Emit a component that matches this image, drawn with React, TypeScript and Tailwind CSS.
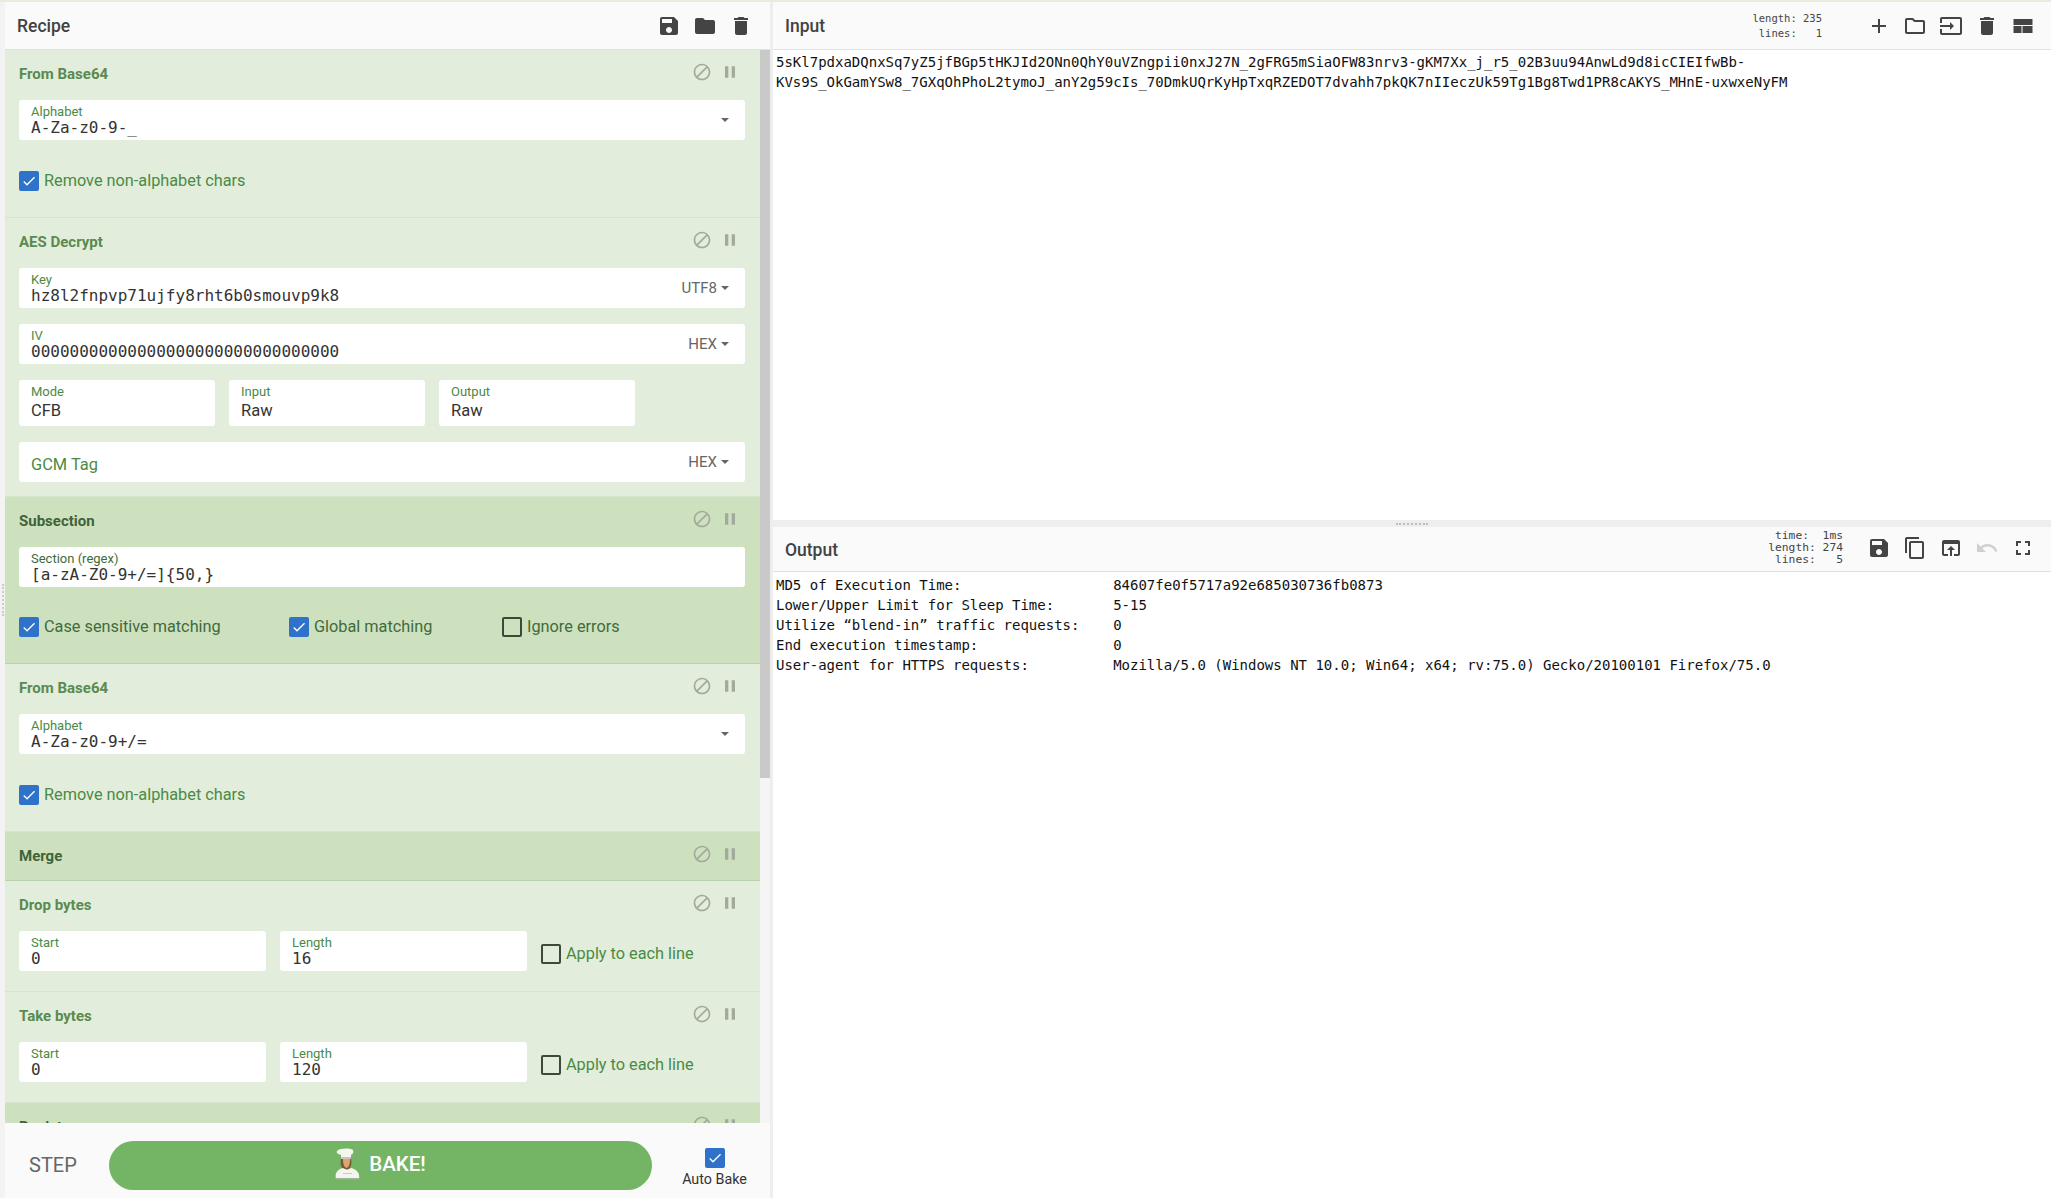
import type { ReactNode } from "react";
import {
  MdAdd,
  MdBlock,
  MdCheck,
  MdContentCopy,
  MdDelete,
  MdFolder,
  MdFullscreen,
  MdInput,
  MdOpenInBrowser,
  MdOutlineFolder,
  MdPause,
  MdSave,
  MdUndo,
} from "react-icons/md";

const sans = "font-['Roboto',sans-serif]";
const mono = "font-['DejaVu_Sans_Mono',monospace]";

function Caret() {
  return <span className="ml-[4px] inline-block h-0 w-0 border-x-[4px] border-t-[4px] border-x-transparent border-t-[#666]" />;
}

function Field({ label, value, suffix, dark, select }: { label: string; value: string; suffix?: string; dark?: boolean; select?: boolean }) {
  return (
    <div className="flex h-[40px] items-start justify-between rounded-[3px] bg-white pl-[12px] pr-[16px]">
      <div>
        <div className={`pt-[4px] text-[13px] leading-[16px] ${dark ? "text-[#3f6b3c]" : "text-[#4b8a45]"}`}>{label}</div>
        <div className={`${mono} -mt-[1px] text-[16px] leading-[18px] text-[#333]`}>{value}</div>
      </div>
      {suffix && (
        <div className="flex h-[40px] items-center text-[15px] text-[#666]">
          {suffix}
          <Caret />
        </div>
      )}
      {select && (
        <div className="flex h-[40px] items-center">
          <Caret />
        </div>
      )}
    </div>
  );
}

function SmallField({ label, value, mono: isMono, className }: { label: string; value: string; mono?: boolean; className: string }) {
  return (
    <div className={`rounded-[3px] bg-white pl-[12px] ${className}`}>
      <div className="pt-[4px] text-[13px] leading-[16px] text-[#4b8a45]">{label}</div>
      <div className={isMono ? `${mono} -mt-[1px] text-[16px] leading-[18px] text-[#333]` : "pt-[1px] text-[16.500px] leading-[20px] text-[#333]"}>{value}</div>
    </div>
  );
}

function Check({ label, on, dark }: { label: string; on?: boolean; dark?: boolean }) {
  return (
    <div className="flex items-center gap-[5px]">
      {on ? (
        <span className="flex h-[20px] w-[20px] items-center justify-center rounded-[2px] bg-[#2f72c9] text-white">
          <MdCheck size={16} />
        </span>
      ) : (
        <span className="h-[20px] w-[20px] rounded-[2px] border-2 border-[#3d4a3a]" />
      )}
      <span className={`text-[16.300px] leading-[20px] ${dark ? "text-[#3f6b3c]" : "text-[#4b8a45]"}`}>{label}</span>
    </div>
  );
}

function Op({ title, dark, compact, children }: { title: string; dark?: boolean; compact?: boolean; children?: ReactNode }) {
  return (
    <section className={`border-b ${dark ? "border-[#b9d2ab] bg-[#cee1bf]" : "border-[#d6e5cc] bg-[#e2eedb]"}`}>
      <div className={`flex items-center justify-between pl-[14px] pr-[20px] ${compact ? "h-[48px]" : "h-[50px] pb-[2px]"}`}>
        <h2 className={`text-[15px] font-bold ${dark ? "text-[#3f6339]" : "text-[#5a8a50]"}`}>{title}</h2>
        <div className="mb-[4px] flex items-center gap-[8px] text-[#a1aa9c]">
          <MdBlock size={20} />
          <MdPause size={20} />
        </div>
      </div>
      {children && <div className="px-[15px] pl-[14px]">{children}</div>}
    </section>
  );
}

function HeaderIcon({ children, muted }: { children: ReactNode; muted?: boolean }) {
  return <span className={`flex w-[36px] justify-center ${muted ? "text-[#d0d0d0]" : "text-[#444]"}`}>{children}</span>;
}

function LayoutIcon() {
  return (
    <svg width="24" height="24" viewBox="0 0 24 24" fill="currentColor" aria-hidden="true">
      <path d="M2.500 5h19v6h-19z" />
      <path d="M2.500 12h8v7h-8z" />
      <path d="M11.500 12h10v7h-10z" />
    </svg>
  );
}

function Chef() {
  return (
    <svg width="25" height="32" viewBox="0 0 25 32" aria-hidden="true">
      <path d="M2 3c3-3 13-3 16-1 1 2 0 4-2 5v4H6V7C3 6 1 5 2 3z" fill="#f5f5f0" />
      <path d="M6 9h10v2H6z" fill="#c6c6ba" />
      <path d="M6 11h10c1 5 0 8-2 10H8c-2-2-3-5-2-10z" fill="#7d5a35" />
      <path d="M8 11h7c0 5-1 8-3.500 9C9 19 8 16 8 11z" fill="#d9a86f" />
      <path d="M1 31c-1-5 0-9 7-11l4 2 4-2c7 2 9 6 8 11z" fill="#f3f5ef" />
      <path d="M8 25h9v1H8z" fill="#c2cdbd" />
      <path d="M1 30h23v1.500H1z" fill="#9db597" />
    </svg>
  );
}

function Recipe() {
  return (
    <div className="flex w-[765px] shrink-0 flex-col">
      <header className="flex h-[48px] shrink-0 items-center justify-between border-b border-[#e0e2dd] bg-[#fafafa] pl-[12px] pr-[11px]">
        <h1 className="pt-[2px] text-[17.500px] font-medium text-[#424242]">Recipe</h1>
        <div className="flex">
          <HeaderIcon><MdSave size={24} /></HeaderIcon>
          <HeaderIcon><MdFolder size={24} /></HeaderIcon>
          <HeaderIcon><MdDelete size={24} /></HeaderIcon>
        </div>
      </header>
      <div className="flex min-h-0 flex-1 overflow-hidden">
        <div className="w-[755px] shrink-0 overflow-hidden">
          <Op title="From Base64">
            <Field label="Alphabet" value="A-Za-z0-9-_" select />
            <div className="pb-[26px] pt-[31px]"><Check label="Remove non-alphabet chars" on /></div>
          </Op>
          <Op title="AES Decrypt">
            <div className="flex flex-col gap-[16px] pb-[14px]">
              <Field label="Key" value="hz8l2fnpvp71ujfy8rht6b0smouvp9k8" suffix="UTF8" />
              <Field label="IV" value="00000000000000000000000000000000" suffix="HEX" />
              <div className="flex gap-[14px]">
                <SmallField label="Mode" value="CFB" className="h-[46px] w-[196px]" />
                <SmallField label="Input" value="Raw" className="h-[46px] w-[196px]" />
                <SmallField label="Output" value="Raw" className="h-[46px] w-[196px]" />
              </div>
              <div className="flex h-[40px] items-center justify-between rounded-[3px] bg-white pl-[12px] pr-[16px]">
                <span className="pt-[6px] text-[16.400px] text-[#4b8a45]">GCM Tag</span>
                <span className="flex items-center text-[15px] text-[#666]">HEX<Caret /></span>
              </div>
            </div>
          </Op>
          <Op title="Subsection" dark>
            <Field label="Section (regex)" value="[a-zA-Z0-9+/=]{50,}" dark />
            <div className="flex pb-[26px] pt-[30px]">
              <div className="w-[270px]"><Check label="Case sensitive matching" on dark /></div>
              <div className="w-[213px]"><Check label="Global matching" on dark /></div>
              <Check label="Ignore errors" dark />
            </div>
          </Op>
          <Op title="From Base64">
            <Field label="Alphabet" value="A-Za-z0-9+/=" select />
            <div className="pb-[26px] pt-[31px]"><Check label="Remove non-alphabet chars" on /></div>
          </Op>
          <Op title="Merge" dark compact />
          <Op title="Drop bytes">
            <div className="flex items-start gap-[14px] pb-[20px]">
              <SmallField label="Start" value="0" mono className="h-[40px] w-[247px]" />
              <SmallField label="Length" value="16" mono className="h-[40px] w-[247px]" />
              <div className="pt-[13px]"><Check label="Apply to each line" /></div>
            </div>
          </Op>
          <Op title="Take bytes">
            <div className="flex items-start gap-[14px] pb-[20px]">
              <SmallField label="Start" value="0" mono className="h-[40px] w-[247px]" />
              <SmallField label="Length" value="120" mono className="h-[40px] w-[247px]" />
              <div className="pt-[13px]"><Check label="Apply to each line" /></div>
            </div>
          </Op>
          <Op title="Register" dark compact />
        </div>
        <div className="w-[10px] shrink-0 bg-[#f5f5f5]">
          <div className="h-[728px] bg-[#c9c9c9]" />
        </div>
      </div>
      <footer className="flex h-[75px] shrink-0 items-center bg-[#fafafa] pt-[9px]">
        <span className="w-[104px] pl-[24px] text-[20px] text-[#666]">STEP</span>
        <button className="flex h-[49px] w-[543px] items-center justify-center gap-[9px] rounded-full bg-[#73b565] pb-[2px] text-[20.500px] font-medium text-white">
          <Chef />
          BAKE!
        </button>
        <div className="flex flex-1 flex-col items-center pl-[7px] pt-[5px]">
          <span className="flex h-[20px] w-[20px] items-center justify-center rounded-[2px] bg-[#2f72c9] text-white">
            <MdCheck size={16} />
          </span>
          <span className="whitespace-nowrap pt-[2px] text-[14.300px] leading-[18px] text-[#333]">Auto Bake</span>
        </div>
      </footer>
    </div>
  );
}

function IOHeader({ title, stats, tall, children }: { title: string; stats: string; tall?: boolean; children: ReactNode }) {
  return (
    <header className={`flex shrink-0 items-center justify-between border-b border-[#e0e2dd] bg-[#fafafa] pl-[12px] pr-[10px] ${tall ? "h-[48px]" : "h-[45px]"}`}>
      <h2 className="pt-[2px] text-[17.500px] font-medium text-[#424242]">{title}</h2>
      <div className={`flex items-center ${tall ? "" : "pb-[2px]"}`}>
        <pre className={`${mono} text-right text-[#444] ${tall ? "mr-[39px] text-[10.500px] leading-[15px]" : "mr-[18px] text-[11.300px] leading-[12px]"}`}>{stats}</pre>
        <div className="flex">{children}</div>
      </div>
    </header>
  );
}

const output = [
  "MD5 of Execution Time:                  84607fe0f5717a92e685030736fb0873",
  "Lower/Upper Limit for Sleep Time:       5-15",
  "Utilize “blend-in” traffic requests:    0",
  "End execution timestamp:                0",
  "User-agent for HTTPS requests:          Mozilla/5.0 (Windows NT 10.0; Win64; x64; rv:75.0) Gecko/20100101 Firefox/75.0",
].join("\n");

function Panels() {
  return (
    <div className="flex min-w-0 flex-1 flex-col">
      <div className="flex h-[518px] shrink-0 flex-col">
        <IOHeader title="Input" stats={"length: 235\nlines:   1"} tall>
          <HeaderIcon><MdAdd size={24} /></HeaderIcon>
          <HeaderIcon><MdOutlineFolder size={24} /></HeaderIcon>
          <HeaderIcon><MdInput size={24} /></HeaderIcon>
          <HeaderIcon><MdDelete size={24} /></HeaderIcon>
          <HeaderIcon><LayoutIcon /></HeaderIcon>
        </IOHeader>
        <p className={`${mono} pl-[3px] pr-[16px] pt-[2px] text-[14px] leading-[20px] text-[#111]`}>
          5sKl7pdxaDQnxSq7yZ5jfBGp5tHKJId2ONn0QhY0uVZngpii0nxJ27N_2gFRG5mSiaOFW83nrv3-gKM7Xx_j_r5_02B3uu94AnwLd9d8icCIEIfwBb-KVs9S_OkGamYSw8_7GXqOhPhoL2tymoJ_anY2g59cIs_70DmkUQrKyHpTxqRZEDOT7dvahh7pkQK7nIIeczUk59Tg1Bg8Twd1PR8cAKYS_MHnE-uxwxeNyFM
        </p>
      </div>
      <div className="flex h-[7px] shrink-0 items-center justify-center bg-[#eee]">
        <span className="w-[32px] border-t-2 border-dotted border-[#bbb]" />
      </div>
      <IOHeader title="Output" stats={"time:  1ms\nlength: 274\nlines:   5"}>
        <HeaderIcon><MdSave size={24} /></HeaderIcon>
        <HeaderIcon><MdContentCopy size={24} /></HeaderIcon>
        <HeaderIcon><MdOpenInBrowser size={24} /></HeaderIcon>
        <HeaderIcon muted><MdUndo size={24} /></HeaderIcon>
        <HeaderIcon><MdFullscreen size={24} /></HeaderIcon>
      </IOHeader>
      <pre className={`${mono} pl-[3px] pt-[3px] text-[14px] leading-[20px] text-[#111]`}>{output}</pre>
    </div>
  );
}

export default function App() {
  return (
    <div className={`${sans} h-screen overflow-hidden bg-white`}>
      <div className="h-[2px] bg-[#e8ebe0]" />
      <div className="flex h-[1196px]">
        <div className="flex w-[5px] shrink-0 items-center justify-center bg-[#f3f3f3]">
          <span className="h-[32px] border-l-2 border-dotted border-[#ccc]" />
        </div>
        <Recipe />
        <div className="w-[3px] shrink-0 bg-[#eee]" />
        <Panels />
      </div>
    </div>
  );
}
